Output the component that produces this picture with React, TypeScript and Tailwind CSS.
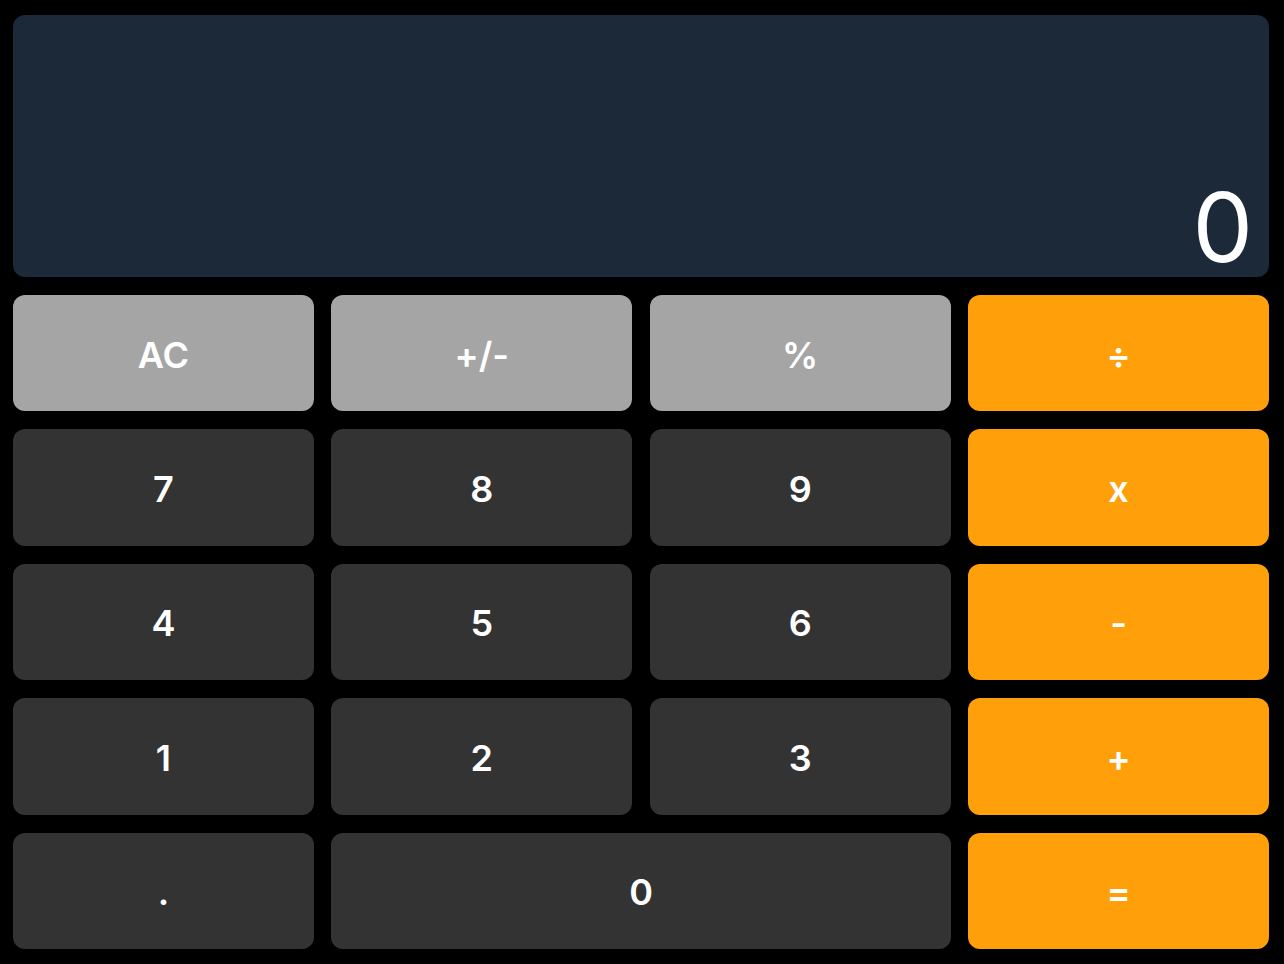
import React from "react";

type Btn = { label: string; kind: "fn" | "num" | "op"; span?: boolean };

const buttons: Btn[] = [
  { label: "AC", kind: "fn" },
  { label: "+/-", kind: "fn" },
  { label: "%", kind: "fn" },
  { label: "÷", kind: "op" },
  { label: "7", kind: "num" },
  { label: "8", kind: "num" },
  { label: "9", kind: "num" },
  { label: "x", kind: "op" },
  { label: "4", kind: "num" },
  { label: "5", kind: "num" },
  { label: "6", kind: "num" },
  { label: "-", kind: "op" },
  { label: "1", kind: "num" },
  { label: "2", kind: "num" },
  { label: "3", kind: "num" },
  { label: "+", kind: "op" },
  { label: ".", kind: "num" },
  { label: "0", kind: "num", span: true },
  { label: "=", kind: "op" },
];

const kindClass: Record<Btn["kind"], string> = {
  fn: "bg-[#a5a5a5]",
  num: "bg-[#333333]",
  op: "bg-[#ff9f0a]",
};

export default function App() {
  return (
    <div
      className="h-screen w-full bg-black pl-[13px] pr-[15px] pt-[15px] pb-[15px] flex flex-col gap-[18px]"
      style={{ fontFamily: "Inter, 'Noto Sans', sans-serif" }}
    >
      <div className="h-[262px] shrink-0 rounded-xl bg-[#1b2939] flex items-end justify-end pr-4 pb-0.5">
        <span className="text-8xl leading-none font-normal text-white">0</span>
      </div>
      <div className="flex-1 grid grid-cols-4 grid-rows-5 gap-x-[17.5px] gap-y-[18px]">
        {buttons.map((b) => (
          <button
            key={b.label}
            className={
              "rounded-xl flex items-center justify-center pt-[3px] text-white text-4xl font-semibold " +
              kindClass[b.kind] +
              (b.span ? " col-span-2" : "")
            }
          >
            {b.label}
          </button>
        ))}
      </div>
    </div>
  );
}
